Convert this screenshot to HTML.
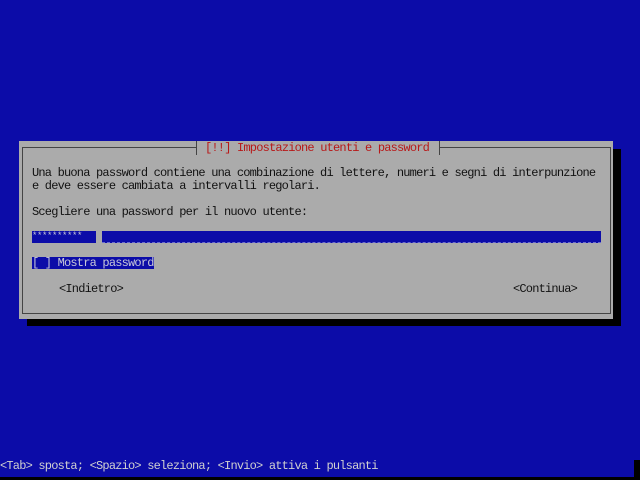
<!DOCTYPE html>
<html><head><style>
body{margin:0;width:640px;height:480px;background:#0c0ca8;position:relative;overflow:hidden;font-family:"Liberation Mono","DejaVu Sans Mono",monospace;font-size:12px;letter-spacing:-0.8px;}
.t{position:absolute;white-space:pre;line-height:13px;}
</style></head><body>
<div style="position:absolute;left:27px;top:149px;width:594px;height:177px;background:#000"></div>
<div style="position:absolute;left:19px;top:141px;width:594px;height:178px;background:#ababab"></div>
<div style="position:absolute;left:22px;top:147px;width:587px;height:165px;border:1px solid #444"></div>
<div style="position:absolute;left:196px;top:141px;width:242px;height:14px;background:#ababab;border-left:1px solid #444;border-right:1px solid #444"></div>
<div class="t" style="left:205px;top:142px;color:#b81818">[!!] Impostazione utenti e password</div>
<div class="t" style="left:32px;top:167px;color:#111">Una buona password contiene una combinazione di lettere, numeri e segni di interpunzione
e deve essere cambiata a intervalli regolari.</div>
<div class="t" style="left:32px;top:206px;color:#111">Scegliere una password per il nuovo utente:</div>
<div style="position:absolute;left:32px;top:231px;width:64px;height:12px;background:#0c0ca8"></div>
<div class="t" style="left:32px;top:230px;color:#c8c8d8;font-size:9px;letter-spacing:-0.4px">**********</div>
<div style="position:absolute;left:102px;top:231px;width:499px;height:11px;background:#0c0ca8;border-bottom:1px dashed #6a6ad0"></div>
<div style="position:absolute;left:32px;top:257px;width:122px;height:12px;background:#0c0ca8"></div>
<div class="t" style="left:32px;top:257px;color:#c8c8d8">[ ] Mostra password</div>
<div class="t" style="left:59px;top:283px;color:#111">&lt;Indietro&gt;</div>
<div class="t" style="left:513px;top:283px;color:#111">&lt;Continua&gt;</div>
<div class="t" style="left:0;top:460px;color:#d0d0d0">&lt;Tab&gt; sposta; &lt;Spazio&gt; seleziona; &lt;Invio&gt; attiva i pulsanti</div>
<div style="position:absolute;left:0;top:477px;width:640px;height:3px;background:#000"></div>
<div style="position:absolute;left:634px;top:460px;width:6px;height:20px;background:#000"></div>
</body></html>
